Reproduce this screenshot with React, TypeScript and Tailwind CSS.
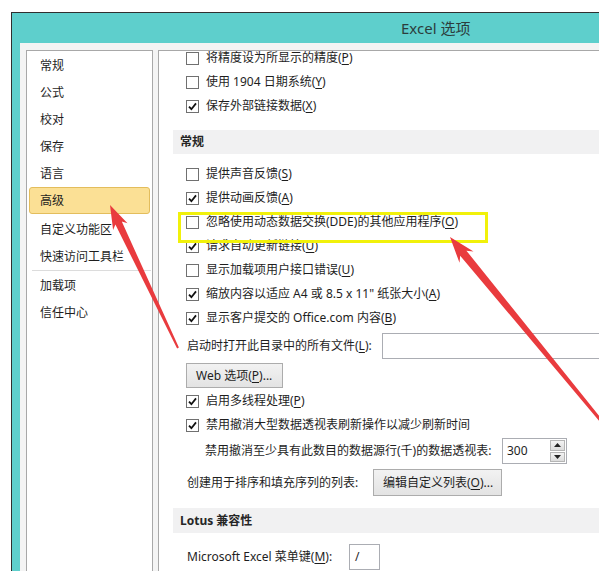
import React from "react";

const font = {
  fontFamily: '"Noto Sans", "Noto Sans CJK SC", sans-serif',
};

function U({ children }: { children: React.ReactNode }) {
  return <span className="underline underline-offset-2">{children}</span>;
}

function Check({ checked, children }: { checked?: boolean; children: React.ReactNode }) {
  return (
    <div className="h-[24px] flex items-center gap-[7px] pl-[27px]">
      <div className="w-[13px] h-[13px] border border-[#707070] bg-white flex items-center justify-center shrink-0">
        {checked && (
          <svg width="9" height="9" viewBox="0 0 9 9">
            <path d="M1 4.6 L3.4 7.2 L8 1.4" fill="none" stroke="#111" strokeWidth="1.8" />
          </svg>
        )}
      </div>
      <span className="whitespace-nowrap">{children}</span>
    </div>
  );
}

function Header({ children }: { children: React.ReactNode }) {
  return (
    <div className="ml-[14px] bg-[#f1f1f2] flex items-center pl-[7px] font-bold text-[#262626]">
      {children}
    </div>
  );
}

function Button({ children, w }: { children: React.ReactNode; w: string }) {
  return (
    <div
      className={`${w} h-full border border-[#acacac] bg-gradient-to-b from-[#f2f2f2] to-[#e3e3e3] flex items-center pl-[9px] whitespace-nowrap`}
    >
      {children}
    </div>
  );
}

const navItems = ["常规", "公式", "校对", "保存", "语言"];

export default function App() {
  return (
    <div className="relative w-[599px] h-[571px] overflow-hidden bg-white text-[12px] text-[#1e1e1e]" style={font}>
      <div className="h-full pt-[12px] pl-[11px]">
        <div className="h-full border-l border-t border-[#2f2f2f] bg-[#5ecfcc] flex flex-col">
          {/* title bar */}
          <div className="h-[30px] flex items-center pl-[389px] text-[15px] text-[#2c3d3d] whitespace-nowrap">
            Excel 选项
          </div>

          {/* body */}
          <div className="flex-1 flex pl-[8px] min-h-0">
            <div className="flex-1 bg-[#f4f4f4] pt-[7px] pl-[6px] flex gap-[5px] min-h-0">
              {/* left nav */}
              <div className="w-[127px] bg-white border border-b-0 border-[#a8a8a8] pt-[1px] shrink-0">
                {navItems.map((t) => (
                  <div key={t} className="h-[27px] flex items-center pl-[13px]">
                    {t}
                  </div>
                ))}
                <div className="h-[27px] mx-[2px] mb-[2px] flex items-center pl-[10px] bg-[#fbe095] border border-[#e3bd5c] rounded-[3px]">
                  高级
                </div>
                <div className="h-[27px] flex items-center pl-[13px]">自定义功能区</div>
                <div className="h-[27px] flex items-center pl-[13px]">快速访问工具栏</div>
                <div className="h-px bg-[#dcdcdc] ml-[5px] mr-[1px] mb-[1px]" />
                <div className="h-[27px] flex items-center pl-[13px]">加载项</div>
                <div className="h-[27px] flex items-center pl-[13px]">信任中心</div>
              </div>

              {/* right content */}
              <div className="flex-1 bg-white border-l border-t border-[#a8a8a8] overflow-hidden">
                <div className="-mt-[5px] flex flex-col">
                  <Check>
                    将精度设为所显示的精度(<U>P</U>)
                  </Check>
                  <Check>
                    使用 1904 日期系统(<U>Y</U>)
                  </Check>
                  <Check checked>
                    保存外部链接数据(<U>X</U>)
                  </Check>

                  <div className="mt-[12px] h-[24px] flex">
                    <div className="flex-1 flex">
                      <Header>
                        <span className="pr-[600px]">常规</span>
                      </Header>
                    </div>
                  </div>

                  <div className="mt-[8px]">
                    <Check>
                      提供声音反馈(<U>S</U>)
                    </Check>
                    <Check checked>
                      提供动画反馈(<U>A</U>)
                    </Check>
                    <Check>
                      忽略使用动态数据交换(DDE)的其他应用程序(<U>O</U>)
                    </Check>
                    <Check checked>
                      请求自动更新链接(<U>U</U>)
                    </Check>
                    <Check>
                      显示加载项用户接口错误(<U>U</U>)
                    </Check>
                    <Check checked>
                      缩放内容以适应 A4 或 8.5 x 11" 纸张大小(<U>A</U>)
                    </Check>
                    <Check checked>
                      显示客户提交的 Office.com 内容(<U>B</U>)
                    </Check>
                  </div>

                  <div className="mt-[3px] h-[26px] flex items-center pl-[28px]">
                    <span className="w-[195px] shrink-0 whitespace-nowrap">
                      启动时打开此目录中的所有文件(<U>L</U>):
                    </span>
                    <div className="h-full w-[300px] shrink-0 border border-[#abadb3] bg-white" />
                  </div>

                  <div className="mt-[4px] h-[25px] pl-[27px] flex">
                    <Button w="w-[97px]">
                      Web 选项(<U>P</U>)...
                    </Button>
                  </div>

                  <div className="mt-[1px]">
                    <Check checked>
                      启用多线程处理(<U>P</U>)
                    </Check>
                    <Check checked>禁用撤消大型数据透视表刷新操作以减少刷新时间</Check>
                  </div>

                  <div className="mt-[1px] h-[26px] flex items-center pl-[46px]">
                    <span className="w-[297px] shrink-0 whitespace-nowrap">
                      禁用撤消至少具有此数目的数据源行(千)的数据透视表:
                    </span>
                    <div className="h-full w-[65px] shrink-0 border border-[#abadb3] bg-white flex">
                      <div className="flex-1 flex items-center pl-[4px]">300</div>
                      <div className="w-[16px] flex flex-col gap-px py-px pr-px">
                        <div className="flex-1 bg-gradient-to-b from-[#f3f3f3] to-[#dcdcdc] border border-[#b5b5b5] flex items-center justify-center">
                          <svg width="7" height="4" viewBox="0 0 7 4">
                            <path d="M0 4 L3.5 0 L7 4 Z" fill="#222" />
                          </svg>
                        </div>
                        <div className="flex-1 bg-gradient-to-b from-[#f3f3f3] to-[#dcdcdc] border border-[#b5b5b5] flex items-center justify-center">
                          <svg width="7" height="4" viewBox="0 0 7 4">
                            <path d="M0 0 L3.5 4 L7 0 Z" fill="#222" />
                          </svg>
                        </div>
                      </div>
                    </div>
                  </div>

                  <div className="mt-[5px] h-[27px] flex items-center pl-[28px]">
                    <span className="w-[186px] shrink-0 whitespace-nowrap">创建用于排序和填充序列的列表:</span>
                    <Button w="w-[129px]">
                      编辑自定义列表(<U>O</U>)...
                    </Button>
                  </div>

                  <div className="mt-[12px] h-[25px] flex">
                    <Header>
                      <span className="pr-[600px] whitespace-nowrap">Lotus 兼容性</span>
                    </Header>
                  </div>

                  <div className="mt-[11px] h-[26px] flex items-center pl-[28px]">
                    <span className="w-[162px] shrink-0 whitespace-nowrap">
                      Microsoft Excel 菜单键(<U>M</U>):
                    </span>
                    <div className="h-full w-[31px] shrink-0 border border-[#abadb3] bg-white flex items-center pl-[5px]">
                      /
                    </div>
                  </div>
                </div>
              </div>
            </div>
          </div>
        </div>
      </div>

      {/* annotations */}
      <div className="absolute left-[178px] top-[212px] w-[310px] h-[31px] border-[3px] border-[#f1f10a]" />
      <svg className="absolute left-0 top-0 pointer-events-none" width="599" height="571" viewBox="0 0 599 571">
        <polygon
          points="110,205 127.5,223.3 121.8,221.6 178.9,347.6 177.1,348.4 115.4,224.6 113.1,230.1"
          fill="#e93b3e"
        />
        <polygon
          points="450,237 473.5,251.4 466.4,250.7 603.2,421 600.8,423 460.2,255.7 459.5,262.8"
          fill="#e93b3e"
        />
      </svg>
    </div>
  );
}
